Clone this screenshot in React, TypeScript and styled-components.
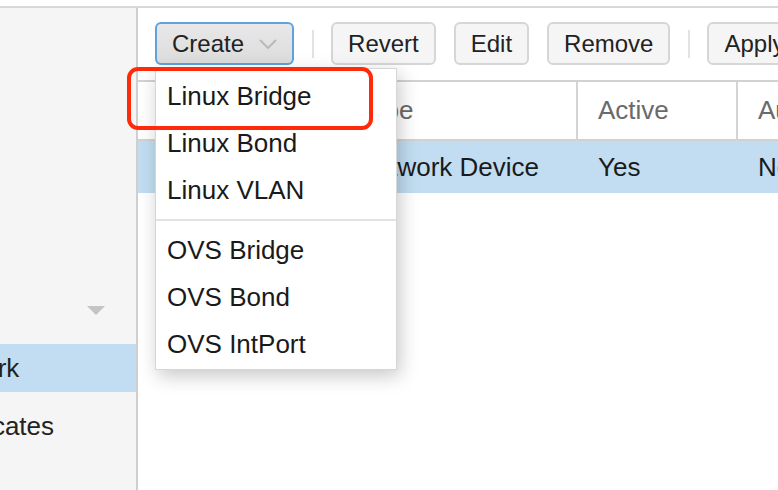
import * as React from 'react'
import styled, { createGlobalStyle } from 'styled-components'

const GlobalStyle = createGlobalStyle`
  html, body {
    margin: 0;
    padding: 0;
    background: #fff;
  }
  body {
    font-family: "Liberation Sans", Arial, sans-serif;
  }
`

const Page = styled.div`
  position: relative;
  width: 778px;
  height: 490px;
  overflow: hidden;
  display: flex;
  flex-direction: column;
`
const TopStrip = styled.div`
  height: 6px;
  flex-shrink: 0;
  border-bottom: 2px solid #d8d8d8;
`
const Body = styled.div`
  flex: 1;
  display: flex;
  min-height: 0;
`
const Sidebar = styled.nav`
  width: 136px;
  flex-shrink: 0;
  background: #f5f5f5;
  border-right: 2px solid #cfcfcf;
  overflow: hidden;
  display: flex;
  flex-direction: column;
  gap: 10px;
  padding-top: 46px;
`
const NavItem = styled.div<{ $selected?: boolean }>`
  height: 48px;
  flex-shrink: 0;
  display: flex;
  align-items: center;
  background: ${({ $selected }) => ($selected ? '#c2ddf2' : 'transparent')};
  font-size: 26px;
  color: #222;
  white-space: nowrap;
`
const NavLabel = styled.span<{ $child?: boolean }>`
  margin-left: ${({ $child }) => ($child ? '-76px' : '-200px')};
  flex: 1;
`
const ExpandArrow = styled.span`
  width: 0;
  height: 0;
  margin-right: 31px;
  border-left: 9px solid transparent;
  border-right: 9px solid transparent;
  border-top: 9px solid #c4c4c4;
`
const Main = styled.main`
  flex: 1;
  min-width: 0;
  overflow: hidden;
  display: flex;
  flex-direction: column;
`
const Toolbar = styled.div`
  height: 72px;
  flex-shrink: 0;
  box-sizing: border-box;
  padding: 14px 0 0 17px;
  display: flex;
  align-items: flex-start;
`
const Button = styled.button<{ $active?: boolean }>`
  height: 43px;
  box-sizing: border-box;
  flex-shrink: 0;
  display: flex;
  align-items: center;
  gap: 15px;
  padding: 0 15px;
  margin-right: 18px;
  border: 2px solid ${({ $active }) => ($active ? '#5fa2dd' : '#d6d6d6')};
  border-radius: 6px;
  background: ${({ $active }) =>
    $active ? 'linear-gradient(#e8e8e8, #dcdcdc)' : '#f5f5f5'};
  font-family: inherit;
  font-size: 24px;
  color: #222;
  white-space: nowrap;
`
const ToolSeparator = styled.div`
  width: 2px;
  height: 28px;
  margin: 8px 17px 0 0;
  background: #e2e2e2;
  flex-shrink: 0;
`
const Grid = styled.div`
  border-top: 2px solid #d2d2d2;
`
const GridHeader = styled.div`
  display: flex;
  height: 59px;
  box-sizing: border-box;
  border-bottom: 2px solid #d2d2d2;
`
const HeaderCell = styled.div<{ $width: number }>`
  width: ${({ $width }) => $width}px;
  flex-shrink: 0;
  box-sizing: border-box;
  padding: 0 20px;
  border-right: 2px solid #d4d4d4;
  display: flex;
  align-items: center;
  font-size: 26px;
  color: #6a6a6a;
  white-space: nowrap;
  overflow: hidden;
`
const GridRow = styled.div<{ $selected?: boolean }>`
  display: flex;
  height: 52px;
  background: ${({ $selected }) => ($selected ? '#c2ddf2' : '#fff')};
`
const Cell = styled.div<{ $width: number }>`
  width: ${({ $width }) => $width}px;
  flex-shrink: 0;
  box-sizing: border-box;
  padding: 0 20px;
  display: flex;
  align-items: center;
  font-size: 26px;
  color: #1a1a1a;
  white-space: nowrap;
  overflow: hidden;
`
const Menu = styled.div`
  position: absolute;
  left: 155px;
  top: 68px;
  width: 242px;
  box-sizing: border-box;
  padding: 4px 0 1px;
  background: #fff;
  border: 1px solid #d6d6d6;
  box-shadow: 3px 6px 18px rgba(0, 0, 0, 0.22);
  z-index: 2;
`
const MenuItem = styled.div`
  height: 47px;
  display: flex;
  align-items: center;
  padding-left: 11px;
  font-size: 26px;
  color: #1a1a1a;
  white-space: nowrap;
`
const MenuSeparator = styled.div`
  height: 2px;
  margin: 5px 0 6px;
  background: #e2e2e2;
`
const Highlight = styled.div`
  position: absolute;
  left: 127px;
  top: 67px;
  width: 246px;
  height: 63px;
  box-sizing: border-box;
  border: 4px solid #ff2a0a;
  border-radius: 11px;
  z-index: 3;
`

const Chevron = () => (
  <svg width="18" height="10" viewBox="0 0 18 10">
    <polyline points="1,1 9,9 17,1" fill="none" stroke="#b9b9b9" strokeWidth="2" />
  </svg>
)

const columns = [
  { key: 'name', label: 'Name', width: 199 },
  { key: 'type', label: 'Type', width: 241 },
  { key: 'active', label: 'Active', width: 160 },
  { key: 'autostart', label: 'Autostart', width: 200 }
]

const row: Record<string, string> = {
  name: 'lo',
  type: 'Network Device',
  active: 'Yes',
  autostart: 'No'
}

export default function App() {
  return (
    <Page>
      <GlobalStyle />
      <TopStrip />
      <Body>
        <Sidebar>
          <NavItem>
            <NavLabel>Search</NavLabel>
          </NavItem>
          <NavItem>
            <NavLabel>Summary</NavLabel>
          </NavItem>
          <NavItem>
            <NavLabel>Notes</NavLabel>
          </NavItem>
          <NavItem>
            <NavLabel>Shell</NavLabel>
          </NavItem>
          <NavItem>
            <NavLabel>System</NavLabel>
            <ExpandArrow />
          </NavItem>
          <NavItem $selected>
            <NavLabel $child>Network</NavLabel>
          </NavItem>
          <NavItem>
            <NavLabel $child>Certificates</NavLabel>
          </NavItem>
        </Sidebar>
        <Main>
          <Toolbar>
            <Button $active>
              Create
              <Chevron />
            </Button>
            <ToolSeparator />
            <Button>Revert</Button>
            <Button>Edit</Button>
            <Button>Remove</Button>
            <ToolSeparator />
            <Button>Apply Configuration</Button>
          </Toolbar>
          <Grid>
            <GridHeader>
              {columns.map((c) => (
                <HeaderCell key={c.key} $width={c.width}>
                  {c.label}
                </HeaderCell>
              ))}
            </GridHeader>
            <GridRow $selected>
              {columns.map((c) => (
                <Cell key={c.key} $width={c.width}>
                  {row[c.key]}
                </Cell>
              ))}
            </GridRow>
          </Grid>
        </Main>
      </Body>
      <Menu>
        <MenuItem>Linux Bridge</MenuItem>
        <MenuItem>Linux Bond</MenuItem>
        <MenuItem>Linux VLAN</MenuItem>
        <MenuSeparator />
        <MenuItem>OVS Bridge</MenuItem>
        <MenuItem>OVS Bond</MenuItem>
        <MenuItem>OVS IntPort</MenuItem>
      </Menu>
      <Highlight />
    </Page>
  )
}
